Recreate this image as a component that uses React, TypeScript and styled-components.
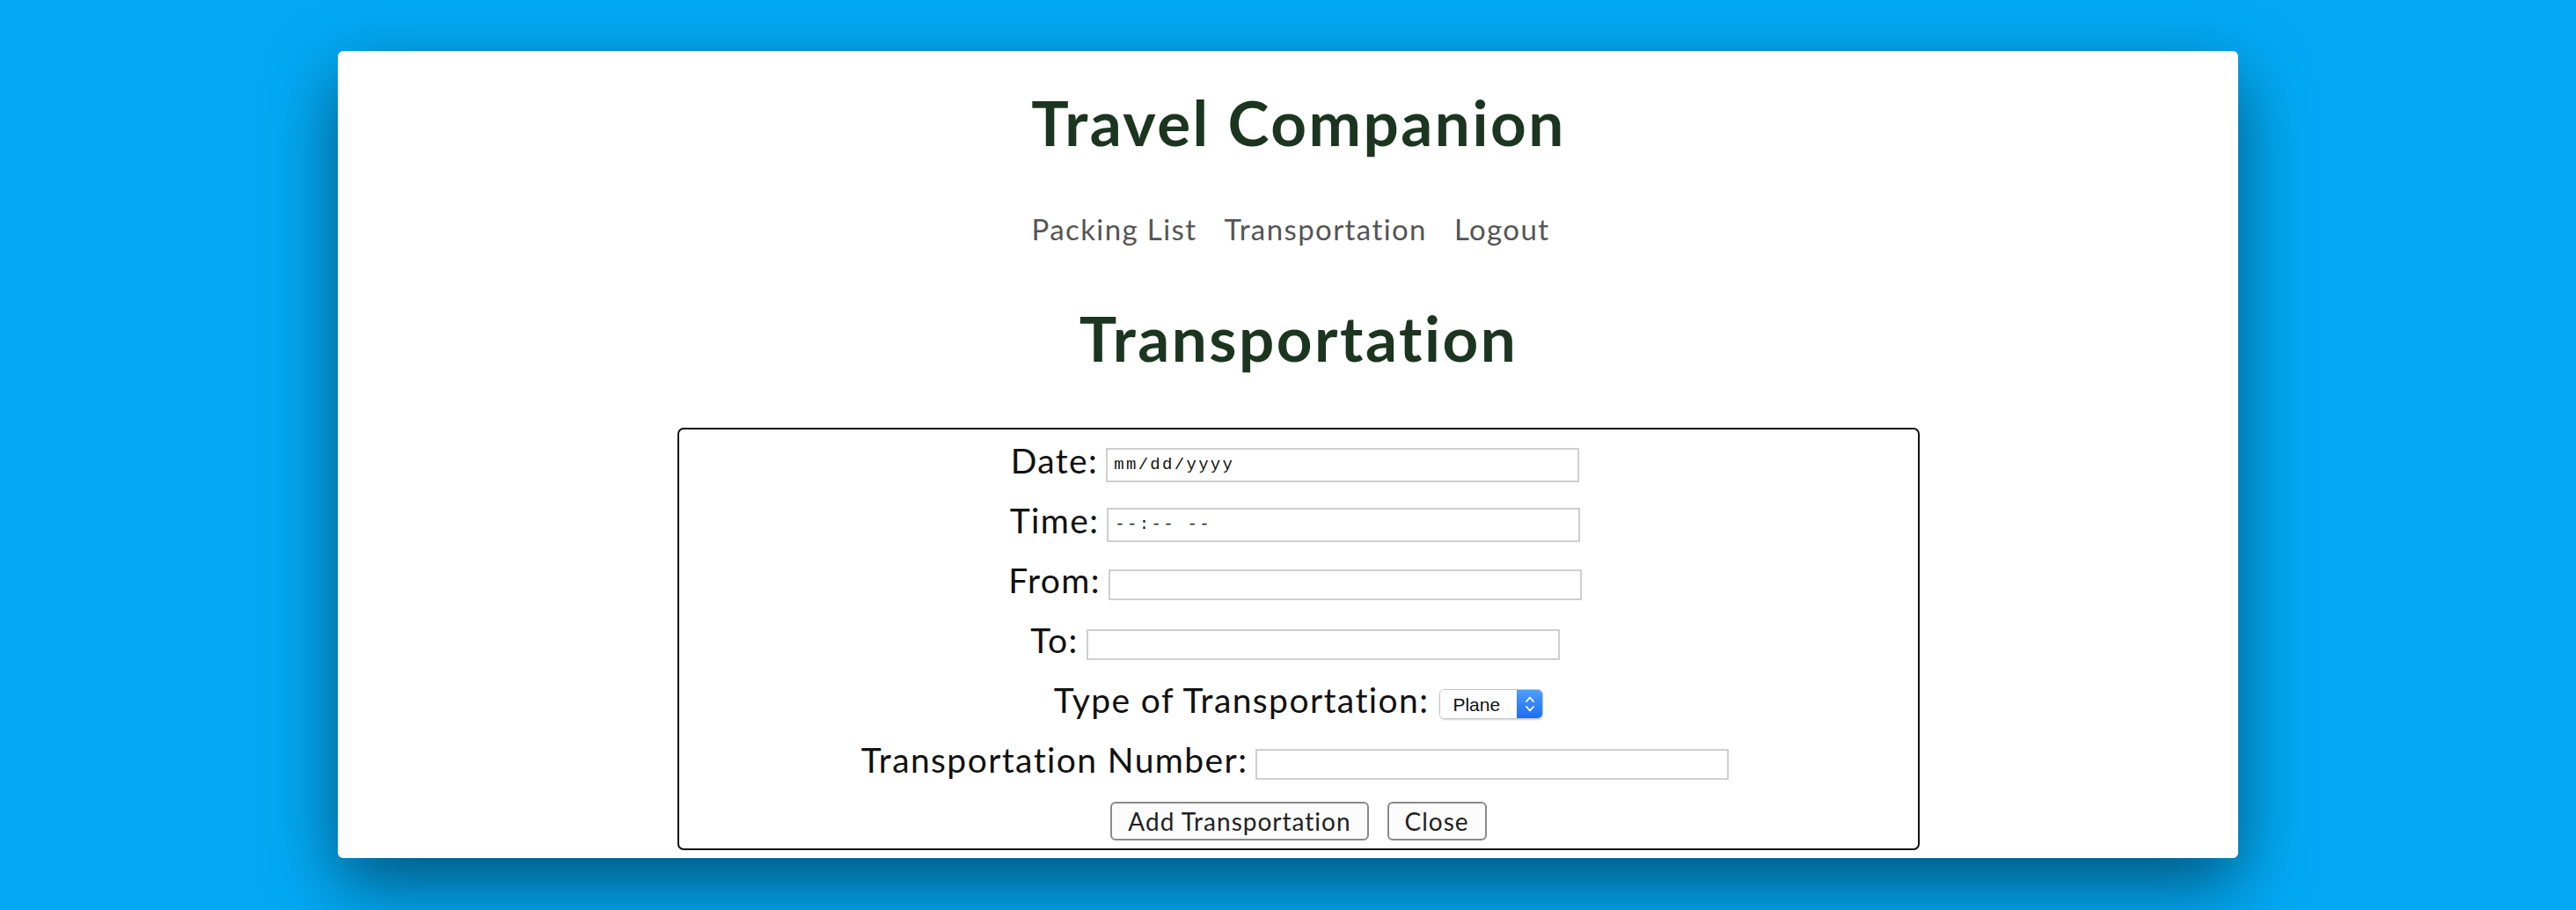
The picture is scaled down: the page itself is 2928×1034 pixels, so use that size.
import { useState } from 'react'
import styled, { createGlobalStyle } from 'styled-components'

const GlobalStyle = createGlobalStyle`
  html, body {
    margin: 0;
    padding: 0;
    background: #03a9f4;
    font-family: Lato, 'Noto Sans', sans-serif;
  }
`

const Page = styled.div`
  min-height: 100vh;
  padding-top: 58px;
  box-sizing: border-box;
`

const Card = styled.main`
  width: 2160px;
  margin: 0 auto;
  background: #fff;
  border-radius: 6px;
  box-shadow: 0 30px 80px rgba(0, 0, 0, 0.5);
  padding: 45px 0 9px 24px;
  box-sizing: border-box;
  display: flex;
  flex-direction: column;
  align-items: center;
`

const Title = styled.h1<{ $gap: number }>`
  margin: 0 0 ${({ $gap }) => $gap}px;
  font-size: 71px;
  line-height: 1;
  font-weight: 700;
  color: #1c3520;
  letter-spacing: 2.5px;
`

const Nav = styled.nav`
  display: flex;
  gap: 31px;
  padding-right: 18px;
  margin-bottom: 71px;
`

const NavLink = styled.a`
  font-size: 33px;
  line-height: 1;
  color: #555;
  letter-spacing: 1.4px;
  text-decoration: none;
  cursor: pointer;
`

const FormBox = styled.form`
  width: 1412px;
  border: 2px solid #111;
  border-radius: 7px;
  padding-top: 6px;
  box-sizing: border-box;
  display: flex;
  flex-direction: column;
`

const Row = styled.div<{ $height?: number, $shift?: number }>`
  height: ${({ $height }) => $height ?? 68}px;
  display: flex;
  align-items: center;
  justify-content: center;
  gap: 9px;
  padding-right: ${({ $shift }) => $shift ?? 8}px;
`

const Label = styled.label`
  font-size: 39px;
  line-height: 1;
  letter-spacing: 1.4px;
  color: #111;
  margin-bottom: 9px;
`

const Field = styled.input<{ $tall?: boolean }>`
  width: 538px;
  height: ${({ $tall }) => ($tall ? 39 : 35)}px;
  box-sizing: border-box;
  border: 2px solid #cfcfcf;
  border-radius: 0;
  padding: 0 7px;
  font-family: 'Liberation Mono', monospace;
  font-size: 19px;
  letter-spacing: 2.3px;
  color: #111;
  outline: none;
  &::placeholder {
    color: #111;
  }
`

const SelectWrap = styled.div`
  display: inline-flex;
  height: 34px;
  width: 118px;
  box-sizing: border-box;
  border: 1px solid #c6c6c6;
  border-radius: 6px;
  overflow: hidden;
  box-shadow: 0 1px 2px rgba(0, 0, 0, 0.18);
  margin-left: 3px;
`

const NativeSelect = styled.select`
  appearance: none;
  flex: 1;
  min-width: 0;
  border: none;
  background: #fff;
  font-family: 'Liberation Sans', Arial, sans-serif;
  font-size: 21px;
  color: #111;
  padding: 0 0 0 14px;
  outline: none;
`

const Stepper = styled.span`
  width: 29px;
  flex: none;
  display: flex;
  align-items: center;
  justify-content: center;
  background: linear-gradient(#4f9dfd, #1d6ef0);
`

const Actions = styled(Row)`
  gap: 21px;
`

const Button = styled.button`
  height: 44px;
  padding: 0 18px;
  font-family: Lato, 'Noto Sans', sans-serif;
  font-size: 28px;
  letter-spacing: 1px;
  color: #222;
  background: #fcfcfc;
  border: 2px solid #8a8a8a;
  border-radius: 6px;
  cursor: pointer;
`

const App = (): JSX.Element => {
  const [kind, setKind] = useState('plane')

  return (
    <>
      <GlobalStyle />
      <Page>
        <Card>
          <Title $gap={70}>Travel Companion</Title>
          <Nav>
            <NavLink>Packing List</NavLink>
            <NavLink>Transportation</NavLink>
            <NavLink>Logout</NavLink>
          </Nav>
          <Title $gap={67}>Transportation</Title>
          <FormBox onSubmit={(e) => { e.preventDefault() }}>
            <Row>
              <Label htmlFor='date'>Date:</Label>
              <Field id='date' $tall placeholder='mm/dd/yyyy' />
            </Row>
            <Row>
              <Label htmlFor='time'>Time:</Label>
              <Field id='time' $tall placeholder='--:-- --' />
            </Row>
            <Row>
              <Label htmlFor='from'>From:</Label>
              <Field id='from' />
            </Row>
            <Row>
              <Label htmlFor='to'>To:</Label>
              <Field id='to' />
            </Row>
            <Row $shift={0}>
              <Label htmlFor='kind'>Type of Transportation:</Label>
              <SelectWrap>
                <NativeSelect id='kind' value={kind} onChange={(e) => { setKind(e.target.value) }}>
                  <option value='plane'>Plane</option>
                  <option value='train'>Train</option>
                  <option value='bus'>Bus</option>
                  <option value='car'>Car</option>
                </NativeSelect>
                <Stepper>
                  <svg width='12' height='22' viewBox='0 0 12 22' fill='none' stroke='#fff' strokeWidth='1.8' strokeLinecap='round' strokeLinejoin='round'>
                    <path d='M2 8 L6 3.5 L10 8' />
                    <path d='M2 14 L6 18.5 L10 14' />
                  </svg>
                </Stepper>
              </SelectWrap>
            </Row>
            <Row>
              <Label htmlFor='number'>Transportation Number:</Label>
              <Field id='number' />
            </Row>
            <Actions $height={62} $shift={0}>
              <Button type='submit'>Add Transportation</Button>
              <Button type='button'>Close</Button>
            </Actions>
          </FormBox>
        </Card>
      </Page>
    </>
  )
}

export default App
